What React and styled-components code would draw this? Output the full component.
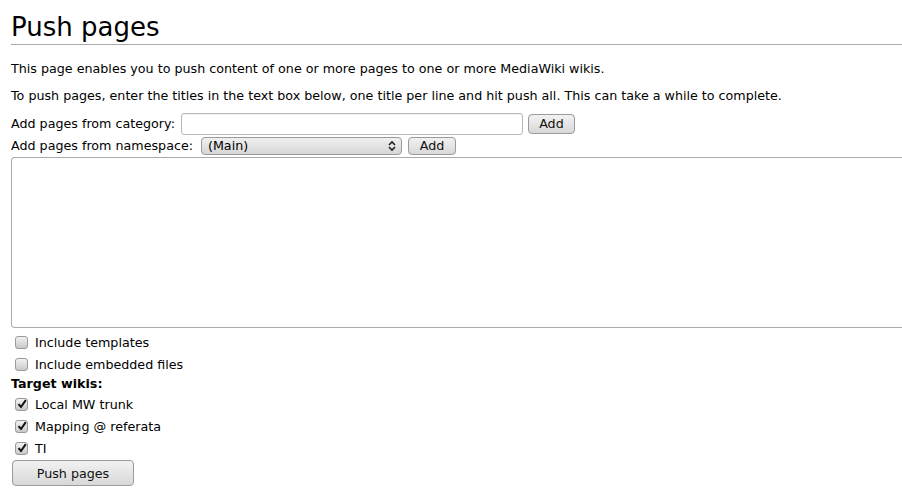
import React from "react";
import styled, { createGlobalStyle } from "styled-components";

const Global = createGlobalStyle`
  html, body { margin: 0; padding: 0; background: #fff; }
  body { font-family: "DejaVu Sans", "Liberation Sans", sans-serif; color: #000; overflow: hidden; }
`;

const Page = styled.div`
  width: 902px;
  height: 502px;
  padding: 0 0 0 11px;
  box-sizing: border-box;
  overflow: hidden;
  font-size: 12.7px;
`;

const Heading = styled.h1`
  margin: 0;
  padding-top: 10px;
  font-size: 26px;
  font-weight: normal;
  line-height: 34px;
  border-bottom: 1px solid #aaa;
  margin-bottom: 14px;
`;

const Para = styled.p`
  margin: 0 0 ${(p) => p.$mb || 0}px 0;
  line-height: 20px;
`;

const Row = styled.div`
  display: flex;
  align-items: center;
  gap: ${(p) => p.$gap || 4}px;
  height: ${(p) => p.$h}px;
`;

const Label = styled.span`
  white-space: nowrap;
`;

const TextInput = styled.div`
  width: 342px;
  height: 22px;
  box-sizing: border-box;
  border: 1px solid #b8b8b8;
  border-radius: 3px;
  background: #fff;
  margin-left: 1px;
  box-shadow: inset 0 1px 1px rgba(0,0,0,0.05);
`;

const Button = styled.div`
  display: flex;
  align-items: center;
  justify-content: center;
  box-sizing: border-box;
  width: ${(p) => p.$w}px;
  height: ${(p) => p.$h}px;
  border: 1px solid #9a9a9a;
  border-radius: 4px;
  background: linear-gradient(#f2f2f2, #d8d8d8);
  font-size: 12.7px;
  color: #111;
`;

const Select = styled.div`
  display: flex;
  align-items: center;
  justify-content: space-between;
  box-sizing: border-box;
  width: 201px;
  height: 18px;
  border: 1px solid #9a9a9a;
  border-radius: 4px;
  background: linear-gradient(#f0f0f0, #d6d6d6);
  padding: 0 5px 0 6px;
  margin-left: 2px;
`;

const Arrows = styled.svg`
  width: 8px;
  height: 12px;
`;

const TextArea = styled.div`
  width: 900px;
  height: 171px;
  box-sizing: border-box;
  border: 1px solid #aaa;
  border-right: none;
  border-radius: 4px 0 0 4px;
  margin-top: 1px;
  margin-bottom: 3px;
`;

const CheckRow = styled.div`
  display: flex;
  align-items: center;
  gap: 7px;
  height: 22px;
  padding-left: 4px;
`;

const Box = styled.span`
  display: inline-flex;
  align-items: center;
  justify-content: center;
  width: 13px;
  height: 13px;
  box-sizing: border-box;
  border: 1px solid #9a9a9a;
  border-radius: 3px;
  background: linear-gradient(#f2f2f2, #c9c9c9);
`;

const Bold = styled.div`
  font-weight: bold;
  height: 15px;
  line-height: 15px;
  padding-top: 1px;
  padding-bottom: 2px;
`;

const Footer = styled.div`
  padding-top: 1px;
  padding-left: 1px;
`;

const Check = () => (
  <svg width="10" height="10" viewBox="0 0 10 10">
    <path d="M1.5 5.2 L4 8 L8.8 1.2" fill="none" stroke="#111" strokeWidth="2" />
  </svg>
);

const CheckItem = ({ checked, children }) => (
  <CheckRow>
    <Box>{checked && <Check />}</Box>
    <span>{children}</span>
  </CheckRow>
);

export default function App() {
  return (
    <>
      <Global />
      <Page>
        <Heading>Push pages</Heading>
        <Para $mb={7}>This page enables you to push content of one or more pages to one or more MediaWiki wikis.</Para>
        <Para $mb={6}>To push pages, enter the titles in the text box below, one title per line and hit push all. This can take a while to complete.</Para>
        <Row $h={23} $gap={5}>
          <Label>Add pages from category:</Label>
          <TextInput />
          <Button $w={47} $h={20}>Add</Button>
        </Row>
        <Row $h={21} $gap={6}>
          <Label>Add pages from namespace:</Label>
          <Select>
            <span>(Main)</span>
            <Arrows viewBox="0 0 8 12">
              <path d="M1 5 L4 2 L7 5 M1 7 L4 10 L7 7" fill="none" stroke="#222" strokeWidth="1.6" />
            </Arrows>
          </Select>
          <Button $w={48} $h={18}>Add</Button>
        </Row>
        <TextArea />
        <CheckItem>Include templates</CheckItem>
        <CheckItem>Include embedded files</CheckItem>
        <Bold>Target wikis:</Bold>
        <CheckItem checked>Local MW trunk</CheckItem>
        <CheckItem checked>Mapping @ referata</CheckItem>
        <CheckItem checked>TI</CheckItem>
        <Footer>
          <Button $w={122} $h={26}>Push pages</Button>
        </Footer>
      </Page>
    </>
  );
}
